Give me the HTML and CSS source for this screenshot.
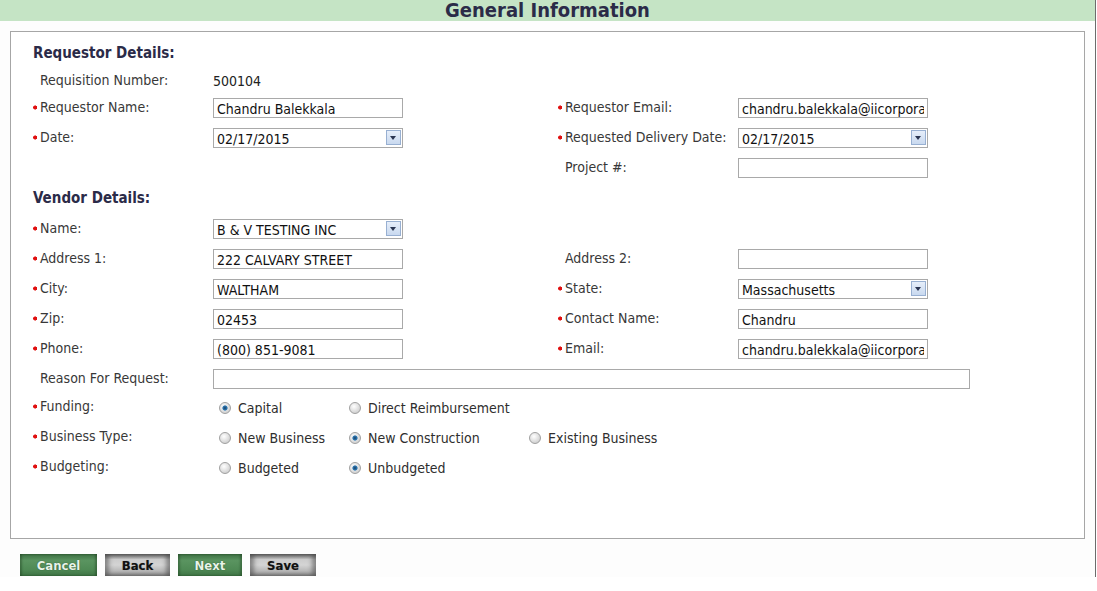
FILE: index.html
```html
<!DOCTYPE html>
<html>
<head>
<meta charset="utf-8">
<link rel="stylesheet" href="styles.css">
</head>
<body>
<div class="page">
  <div class="header">General Information</div>
  <div class="panel">
    <div class="section">Requestor Details:</div>
    <div class="row row-short">
      <div class="label"><span class="slot"></span>Requisition Number:</div>
      <div class="value">500104</div>
    </div>
    <div class="row">
      <div class="label"><span class="slot req"></span>Requestor Name:</div>
      <div class="field"><input class="text" value="Chandru Balekkala"></div>
      <div></div>
      <div class="label"><span class="slot req"></span>Requestor Email:</div>
      <div class="field"><input class="text" value="chandru.balekkala@iicorporation.com"></div>
    </div>
    <div class="row">
      <div class="label"><span class="slot req"></span>Date:</div>
      <div class="field"><div class="select"><span>02/17/2015</span><span class="arrow"></span></div></div>
      <div></div>
      <div class="label"><span class="slot req"></span>Requested Delivery Date:</div>
      <div class="field"><div class="select"><span>02/17/2015</span><span class="arrow"></span></div></div>
    </div>
    <div class="row">
      <div class="label"></div>
      <div class="field"></div>
      <div></div>
      <div class="label"><span class="slot"></span>Project #:</div>
      <div class="field"><input class="text" value=""></div>
    </div>
    <div class="section section-row">Vendor Details:</div>
    <div class="row">
      <div class="label"><span class="slot req"></span>Name:</div>
      <div class="field"><div class="select"><span>B &amp; V TESTING INC</span><span class="arrow"></span></div></div>
    </div>
    <div class="row">
      <div class="label"><span class="slot req"></span>Address 1:</div>
      <div class="field"><input class="text" value="222 CALVARY STREET"></div>
      <div></div>
      <div class="label"><span class="slot"></span>Address 2:</div>
      <div class="field"><input class="text" value=""></div>
    </div>
    <div class="row">
      <div class="label"><span class="slot req"></span>City:</div>
      <div class="field"><input class="text" value="WALTHAM"></div>
      <div></div>
      <div class="label"><span class="slot req"></span>State:</div>
      <div class="field"><div class="select"><span>Massachusetts</span><span class="arrow"></span></div></div>
    </div>
    <div class="row">
      <div class="label"><span class="slot req"></span>Zip:</div>
      <div class="field"><input class="text" value="02453"></div>
      <div></div>
      <div class="label"><span class="slot req"></span>Contact Name:</div>
      <div class="field"><input class="text" value="Chandru"></div>
    </div>
    <div class="row">
      <div class="label"><span class="slot req"></span>Phone:</div>
      <div class="field"><input class="text" value="(800) 851-9081"></div>
      <div></div>
      <div class="label"><span class="slot req"></span>Email:</div>
      <div class="field"><input class="text" value="chandru.balekkala@iicorporation.com"></div>
    </div>
    <div class="row row-reason">
      <div class="label"><span class="slot"></span>Reason For Request:</div>
      <div class="field wide"><input class="text" value=""></div>
    </div>
    <div class="row radio-row">
      <div class="label"><span class="slot req"></span>Funding:</div>
      <div class="radios">
        <label class="opt"><span class="radio on"></span>Capital</label>
        <label class="opt"><span class="radio"></span>Direct Reimbursement</label>
      </div>
    </div>
    <div class="row radio-row">
      <div class="label"><span class="slot req"></span>Business Type:</div>
      <div class="radios">
        <label class="opt"><span class="radio"></span>New Business</label>
        <label class="opt"><span class="radio on"></span>New Construction</label>
        <label class="opt"><span class="radio"></span>Existing Business</label>
      </div>
    </div>
    <div class="row radio-row">
      <div class="label"><span class="slot req"></span>Budgeting:</div>
      <div class="radios">
        <label class="opt"><span class="radio"></span>Budgeted</label>
        <label class="opt"><span class="radio on"></span>Unbudgeted</label>
      </div>
    </div>
  </div>
  <div class="buttons">
    <button class="btn green">Cancel</button>
    <button class="btn gray">Back</button>
    <button class="btn green">Next</button>
    <button class="btn gray">Save</button>
  </div>
</div>
</body>
</html>
```
FILE: styles.css
```css
html, body {
  margin: 0;
  padding: 0;
  background: #ffffff;
}
body {
  font-family: "DejaVu Sans", Verdana, sans-serif;
  font-stretch: condensed;
  font-size: 14px;
  color: #333333;
}
.page {
  width: 1095px;
  height: 577px;
  border-right: 1px solid #6c6c6c;
  background: #fdfdfd;
}
.header {
  height: 21px;
  line-height: 21px;
  background: #c5e4c5;
  text-align: center;
  font-weight: bold;
  font-size: 20px;
  color: #2b2b48;
}
.panel {
  margin: 10px 0 0 10px;
  width: 1051px;
  height: 498px;
  border: 1px solid #a6a6a6;
  background: #ffffff;
  padding: 8px 0 0 22px;
}
.section {
  height: 26px;
  line-height: 26px;
  font-weight: bold;
  font-size: 15px;
  color: #2b2b48;
}
.section-row {
  height: 31px;
  line-height: 30px;
}
.row {
  display: grid;
  grid-template-columns: 180px 190px 155px 180px 190px;
  height: 30px;
  align-items: center;
}
.row-short {
  height: 27px;
  padding-top: 3px;
  box-sizing: border-box;
}
.row-reason {
  height: 29px;
}
.label {
  display: flex;
  align-items: center;
  color: #383838;
  white-space: nowrap;
  margin-top: -2px;
}
.slot {
  display: inline-block;
  width: 7px;
  height: 5px;
  flex: none;
}
.slot.req {
  background: radial-gradient(circle at 2.2px 2.5px, #e01010 1.8px, transparent 2.3px);
}
.value {
  color: #222222;
}
.field {
  height: 20px;
}
.field.wide {
  grid-column: 2 / 6;
}
.text {
  box-sizing: border-box;
  width: 190px;
  height: 20px;
  margin: 0;
  border: 1px solid #a9a9a9;
  padding: 2px 3px 0;
  font-family: "DejaVu Sans", Verdana, sans-serif;
  font-stretch: condensed;
  font-size: 14px;
  color: #111111;
  background: #ffffff;
  outline: none;
}
.field.wide .text {
  width: 757px;
}
.select {
  box-sizing: border-box;
  position: relative;
  width: 190px;
  height: 20px;
  border: 1px solid #a9a9a9;
  background: #ffffff;
  padding: 0 3px;
  color: #111111;
  font-size: 14px;
}
.select span:first-child {
  display: block;
  line-height: 19px;
  padding-top: 1px;
}
.arrow {
  position: absolute;
  right: 1px;
  top: 1px;
  width: 15px;
  height: 15px;
  box-sizing: border-box;
  border: 1px solid #98b0d2;
  background: linear-gradient(#e6eefa, #c9d9ef);
}
.arrow::after {
  content: "";
  position: absolute;
  left: 3px;
  top: 5px;
  border-left: 3.5px solid transparent;
  border-right: 3.5px solid transparent;
  border-top: 4px solid #2a3552;
}
.radio-row {
  grid-template-columns: 180px auto;
}
.radio-row .label {
  margin-top: -4px;
}
.radios {
  display: grid;
  grid-template-columns: 130px 180px auto;
  align-items: center;
}
.opt {
  display: flex;
  align-items: center;
  color: #2e2e2e;
  white-space: nowrap;
}
.radio {
  box-sizing: border-box;
  width: 12px;
  height: 12px;
  margin: 0 7px 0 6px;
  border-radius: 50%;
  border: 1px solid #a0a0a0;
  background: radial-gradient(circle at 40% 35%, #ffffff, #d4d4d4 70%, #bcbcbc);
  flex: none;
}
.radio.on {
  background:
    radial-gradient(circle at 50% 50%, #173f66 0, #2f7bb5 2.2px, transparent 3px),
    radial-gradient(circle at 40% 35%, #ffffff, #d4d4d4 70%, #bcbcbc);
}
.buttons {
  display: flex;
  gap: 8px;
  padding: 15px 0 0 20px;
}
.btn {
  height: 22px;
  border: none;
  padding: 0;
  margin: 0;
  font-family: "DejaVu Sans", Verdana, sans-serif;
  font-stretch: condensed;
  font-weight: bold;
  font-size: 13px;
  cursor: pointer;
}
.btn.green {
  color: #e8f4e8;
  text-shadow: 0 0 1px #1d3a1f;
  background: linear-gradient(#3d6e42, #5a9460 30%, #4f8a55 70%, #3f7345);
  box-shadow: inset 2px 0 2px rgba(20, 50, 20, 0.35), inset -2px 0 2px rgba(20, 50, 20, 0.35);
}
.btn.gray {
  color: #111111;
  text-shadow: 0 0 1px #888888;
  background: linear-gradient(#6a6a6a, #cccccc 25%, #d4d4d4 50%, #b4b4b4 80%, #909090);
  box-shadow: inset 4px 0 4px rgba(60, 60, 60, 0.5), inset -4px 0 4px rgba(60, 60, 60, 0.5);
}
.btn:nth-child(1) { width: 77px; }
.btn:nth-child(2) { width: 65px; }
.btn:nth-child(3) { width: 64px; }
.btn:nth-child(4) { width: 66px; }
```
